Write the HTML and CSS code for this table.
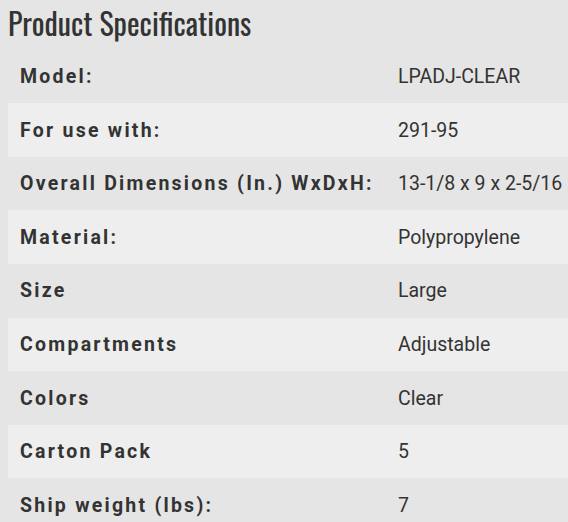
FILE: index.html
```html
<!DOCTYPE html>
<html lang="en">
<head>
    <meta charset="UTF-8">
    <meta name="viewport" content="width=device-width, initial-scale=1.0">
    <title>Product Specifications</title>
    <link rel="stylesheet" href="styles.css">
</head>
<body>
    <div class="specs">
        <h2 class="specs-title">Product Specifications</h2>

        <table class="specs-table">
            <tr>
                <th>Model:</th>
                <td>LPADJ-CLEAR</td>
            </tr>
            <tr>
                <th>For use with:</th>
                <td>291-95</td>
            </tr>
            <tr>
                <th>Overall Dimensions (In.) WxDxH:</th>
                <td>13-1/8 x 9 x 2-5/16</td>
            </tr>
            <tr>
                <th>Material:</th>
                <td>Polypropylene</td>
            </tr>
            <tr>
                <th>Size</th>
                <td>Large</td>
            </tr>
            <tr>
                <th>Compartments</th>
                <td>Adjustable</td>
            </tr>
            <tr>
                <th>Colors</th>
                <td>Clear</td>
            </tr>
            <tr>
                <th>Carton Pack</th>
                <td>5</td>
            </tr>
            <tr>
                <th>Ship weight (lbs):</th>
                <td>7</td>
            </tr>
        </table>
    </div>
</body>
</html>
```

FILE: styles.css
```css
body {
    margin: 0;
    padding: 8px 0 0 8px;
    background-color: #e5e5e5;
    font-family: Roboto, "Liberation Sans", sans-serif;
    color: #333;
}
.specs-title {
    margin: 0 0 11.7px;
    font-family: Oswald, "Liberation Sans Narrow", "DejaVu Sans Condensed", sans-serif;
    font-stretch: condensed;
    font-size: 30px;
    font-weight: normal;
    line-height: 30px;
    color: #333;
}
.specs-table {
    width: 100%;
    border-collapse: collapse;
}
.specs-table tr {
    height: 53.6px;
}
.specs-table tr:nth-child(even) {
    background: #eee;
}
.specs-table th,
.specs-table td {
    padding: 0 12px;
    text-align: left;
    vertical-align: middle;
    font-size: 19.5px;
}
.specs-table th {
    width: 354px;
    font-weight: bold;
    letter-spacing: 2.25px;
}
.specs-table td {
    padding-right: 0;
    font-weight: normal;
    white-space: nowrap;
}
```
